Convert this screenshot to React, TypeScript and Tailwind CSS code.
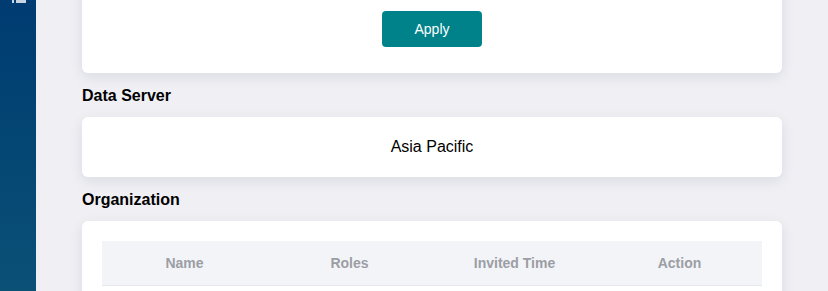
import React from "react";

export default function App() {
  const cols = ["Name", "Roles", "Invited Time", "Action"];
  return (
    <div
      className="flex h-[291px] w-[828px] overflow-hidden bg-[#efeff4]"
      style={{ fontFamily: '"Liberation Sans", Arial, sans-serif' }}
    >
      <aside className="relative h-full w-[36px] shrink-0 bg-gradient-to-b from-[#003b71] to-[#0b5176]">
        <div className="absolute left-[12px] top-0 h-[3px] w-[2px] bg-[#c9d5e2]" />
        <div className="absolute left-[16px] top-0 h-[3px] w-[10px] bg-[#c9d5e2]" />
      </aside>
      <main className="flex w-[700px] shrink-0 flex-col pl-[46px] box-content">
        <section className="-mt-[20px] flex shrink-0 justify-center rounded-[6px] bg-white pb-[26px] pt-[31px] shadow-[0_4px_14px_rgba(20,30,60,0.09)]">
          <button className="h-[36px] w-[100px] rounded-[4px] bg-[#00828b] text-[14px] text-white">
            Apply
          </button>
        </section>
        <h2 className="mb-[9px] mt-[11px] shrink-0 text-[16px] font-bold leading-[24px] text-black">
          Data Server
        </h2>
        <section className="flex h-[60px] shrink-0 items-center justify-center rounded-[6px] bg-white text-[16px] text-black shadow-[0_4px_14px_rgba(20,30,60,0.09)]">
          Asia Pacific
        </section>
        <h2 className="mb-[9px] mt-[11px] shrink-0 text-[16px] font-bold leading-[24px] text-black">
          Organization
        </h2>
        <section className="shrink-0 rounded-[6px] bg-white px-[20px] pt-[20px] shadow-[0_4px_14px_rgba(20,30,60,0.09)]">
          <div className="grid h-[45px] grid-cols-4 items-center border-b border-[#e6e8ee] bg-[#f3f4f8]">
            {cols.map((c) => (
              <div key={c} className="pt-[1px] text-center text-[14px] font-bold text-[#9b9ea4]">
                {c}
              </div>
            ))}
          </div>
          <div className="h-[20px]" />
        </section>
      </main>
    </div>
  );
}
